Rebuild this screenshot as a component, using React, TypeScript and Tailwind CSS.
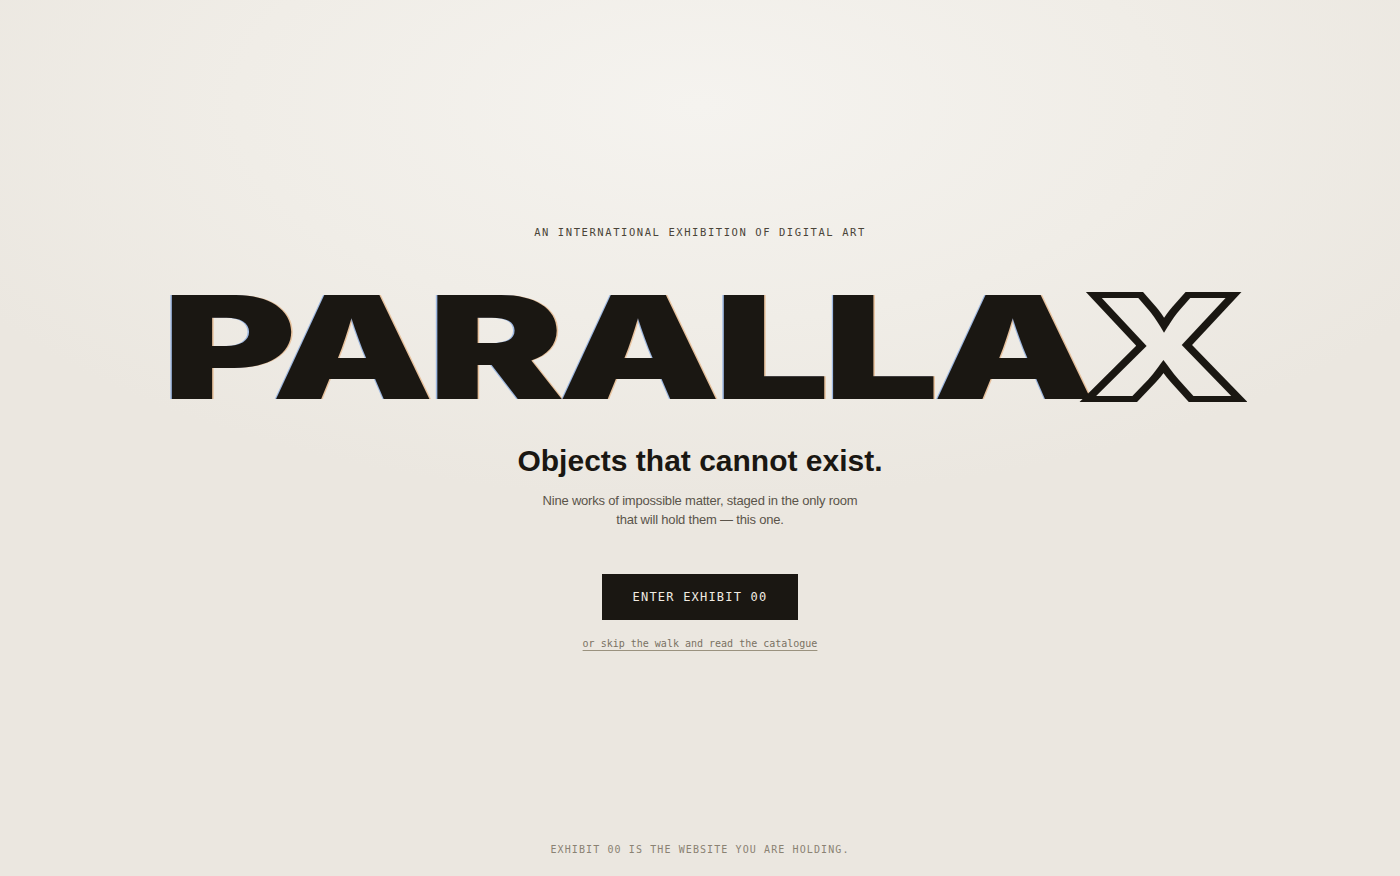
import React from "react";

export default function App() {
  return (
    <div className="relative grid min-h-screen grid-rows-[1fr_auto_1fr] overflow-hidden bg-[radial-gradient(ellipse_60%_45%_at_50%_12%,#f5f3ef_0%,#f0ede7_55%,#ebe7e0_100%)] text-[#1a1712]">
      <div />
      <main className="flex flex-col items-center">
        <p className="font-['DejaVu_Sans_Mono','Liberation_Mono',monospace] text-[10.5px] uppercase tracking-[0.15em] text-[#4a4438]">
          An international exhibition of digital art
        </p>
        <h1 className="mt-[41px] flex h-[130px] items-center justify-center whitespace-nowrap font-['Inter','Liberation_Sans',sans-serif] text-[143px] font-black leading-none [text-shadow:-1px_0_rgba(40,110,220,0.4),1px_0_rgba(220,120,30,0.35)]">
          <span className="inline-block origin-center scale-x-[1.43] tracking-[-0.031em]">
            PARALLA
            <span className="ml-[-4px] inline-block text-transparent [-webkit-text-stroke:6px_#1a1712] [text-shadow:none]">
              X
            </span>
          </span>
        </h1>
        <h2 className="mt-[34px] font-['Liberation_Sans',Arial,sans-serif] text-[30px] font-bold leading-none text-[#1a1712]">
          Objects that cannot exist.
        </h2>
        <p className="mt-[15px] text-center font-['Liberation_Sans',Arial,sans-serif] text-[13px] leading-[19px] tracking-[-0.015em] text-[#5a544a]">
          Nine works of impossible matter, staged in the only room
          <br />
          that will hold them — this one.
        </p>
        <button className="mt-[45px] flex h-[46px] w-[196px] items-center justify-center bg-[#1a1712] font-['DejaVu_Sans_Mono','Liberation_Mono',monospace] text-[12px] uppercase tracking-[0.1em] text-[#f1ece2]">
          Enter Exhibit 00
        </button>
        <a
          className="mt-[16px] font-['DejaVu_Sans_Mono','Liberation_Mono',monospace] text-[10px] text-[#7a7263] underline decoration-[#9a927f] underline-offset-[3px]"
          href="#"
        >
          or skip the walk and read the catalogue
        </a>
      </main>
      <div className="flex flex-col justify-end pb-[19px]">
        <p className="text-center font-['DejaVu_Sans_Mono','Liberation_Mono',monospace] text-[10px] uppercase tracking-[0.11em] text-[#8a8273]">
          Exhibit 00 is the website you are holding.
        </p>
      </div>
    </div>
  );
}
